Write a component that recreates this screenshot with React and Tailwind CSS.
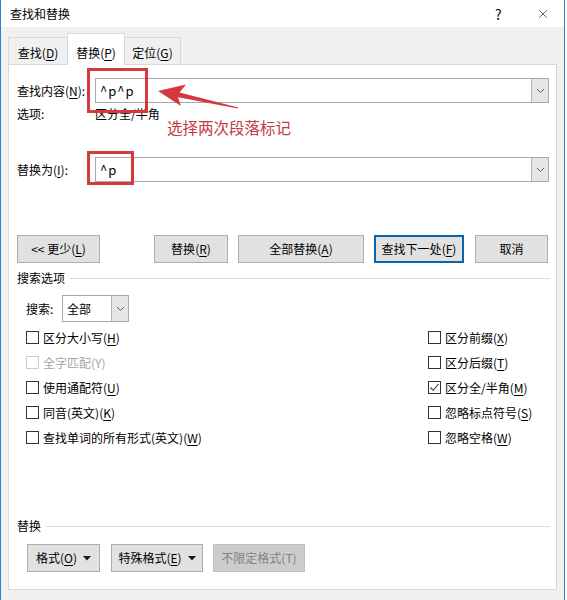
import { X } from 'lucide-react';

const Key = ({ k }) => (
    <>
        (<span className="underline underline-offset-2 decoration-1">{k}</span>)
    </>
);

function Chevron() {
    return (
        <svg width="9" height="6" viewBox="0 0 9 6" className="text-[#606060]">
            <polyline points="1,1 4.5,4.5 8,1" fill="none" stroke="currentColor" strokeWidth="1" />
        </svg>
    );
}

function Combo({ value }) {
    return (
        <div className="flex-1 h-[25px] flex border border-[#a9a9a9] bg-white">
            <div className="flex-1 flex items-center pl-[4px] text-[13px] text-black tracking-[1px]">{value}</div>
            <div className="w-[17px] h-full bg-[#e6e6e6] border-l border-[#b4b4b4] flex items-center justify-center">
                <Chevron />
            </div>
        </div>
    );
}

function Btn({ className, focus, disabled, children }) {
    const border = focus ? 'border-2 border-[#0a64ad]' : disabled ? 'border border-[#bfbfbf]' : 'border border-[#adadad]';
    const tone = disabled ? 'bg-[#cccccc] text-[#838383]' : 'bg-[#e1e1e1] text-black';
    return (
        <div className={`h-[28px] flex items-center justify-center gap-[6px] ${border} ${tone} ${className}`}>
            {children}
        </div>
    );
}

function Caret() {
    return (
        <svg width="8" height="5" viewBox="0 0 8 5">
            <polygon points="0,0 8,0 4,4.5" fill="#1a1a1a" />
        </svg>
    );
}

function Check({ label, k, checked, disabled }) {
    return (
        <div className="h-[25px] flex items-center">
            <div className={`w-[13px] h-[13px] bg-white border flex items-center justify-center ${disabled ? 'border-[#cccccc]' : 'border-[#333333]'}`}>
                {checked && (
                    <svg width="11" height="11" viewBox="0 0 11 11">
                        <polyline points="1.5,5.5 4.2,8.3 9.5,2" fill="none" stroke="#333" strokeWidth="1.1" />
                    </svg>
                )}
            </div>
            <span className={`ml-[4px] ${disabled ? 'text-[#a6a6a6]' : 'text-black'}`}>
                {label}
                {disabled ? `(${k})` : <Key k={k} />}
            </span>
        </div>
    );
}

function SectionTitle({ children }) {
    return (
        <div className="h-[16px] flex items-center pl-[8px] pr-[6px]">
            <span>{children}</span>
            <div className="flex-1 h-px bg-[#dcdcdc] ml-[5px]" />
        </div>
    );
}

const leftOpts = [
    { label: '区分大小写', k: 'H' },
    { label: '全字匹配', k: 'Y', disabled: true },
    { label: '使用通配符', k: 'U' },
    { label: '同音(英文)', k: 'K' },
    { label: '查找单词的所有形式(英文)', k: 'W' },
];

const rightOpts = [
    { label: '区分前缀', k: 'X' },
    { label: '区分后缀', k: 'T' },
    { label: '区分全/半角', k: 'M', checked: true },
    { label: '忽略标点符号', k: 'S' },
    { label: '忽略空格', k: 'W' },
];

export default function App() {
    return (
        <div className="relative w-[565px] h-[600px] bg-[#f0f0f0] border-x border-[#2b7fd6] font-['Noto_Sans_CJK_SC','Microsoft_YaHei',sans-serif] text-[12px] leading-[16px] text-black overflow-hidden">
            {/* 标题栏 */}
            <div className="h-[27px] bg-white flex items-center pl-[9px]">
                <span className="flex-1">查找和替换</span>
                <span className="text-[14px] w-[10px] mr-[31px]">?</span>
                <X className="w-[14px] h-[14px] mr-[14px] text-[#222]" strokeWidth={1.2} />
            </div>

            {/* 选项卡 */}
            <div className="h-[37px] flex items-end pl-[7px]">
                <div className="w-[59px] h-[27px] border-l border-t border-[#d9d9d9] bg-[#f0f0f0] flex justify-center pt-[7px]">
                    查找<Key k="D" />
                </div>
                <div className="relative z-10 w-[58px] h-[32px] -mb-px border-x border-t border-[#d9d9d9] bg-white flex justify-center pt-[11px]">
                    替换<Key k="P" />
                </div>
                <div className="w-[56px] h-[27px] border-r border-t border-[#d9d9d9] bg-[#f0f0f0] flex justify-center pt-[7px]">
                    定位<Key k="G" />
                </div>
            </div>

            {/* 面板 */}
            <div className="ml-[7px] w-[549px] bg-white border border-[#d9d9d9] pb-[17px]">
                <div className="mt-[13px] flex items-center pl-[8px] pr-[7px]">
                    <div className="w-[78px]">
                        查找内容<Key k="N" />:
                    </div>
                    <Combo value="^p^p" />
                </div>
                <div className="mt-[3px] h-[16px] flex items-center pl-[8px]">
                    <div className="w-[78px]">选项:</div>
                    <div>区分全/半角</div>
                </div>

                <div className="mt-[35px] flex items-center pl-[8px] pr-[7px]">
                    <div className="w-[78px]">
                        替换为<Key k="I" />:
                    </div>
                    <Combo value="^p" />
                </div>

                <div className="mt-[53px] flex pl-[8px]">
                    <Btn className="w-[83px]">
                        <span>
                            &lt;&lt; 更少<Key k="L" />
                        </span>
                    </Btn>
                    <Btn className="w-[74px] ml-[54px]">
                        <span>
                            替换<Key k="R" />
                        </span>
                    </Btn>
                    <Btn className="w-[126px] ml-[10px]">
                        <span>
                            全部替换<Key k="A" />
                        </span>
                    </Btn>
                    <Btn className="w-[90px] ml-[10px]" focus>
                        <span>
                            查找下一处<Key k="F" />
                        </span>
                    </Btn>
                    <Btn className="w-[73px] ml-[11px]">取消</Btn>
                </div>

                <div className="mt-[7px]">
                    <SectionTitle>搜索选项</SectionTitle>
                </div>

                <div className="mt-[9px] flex items-center pl-[17px]">
                    <div className="w-[36px]">搜索:</div>
                    <div className="w-[67px] h-[27px] flex border border-[#a9a9a9] bg-white">
                        <div className="flex-1 flex items-center pl-[4px]">全部</div>
                        <div className="w-[17px] h-full bg-[#e6e6e6] border-l border-[#b4b4b4] flex items-center justify-center">
                            <Chevron />
                        </div>
                    </div>
                </div>

                <div className="mt-[3px] flex pl-[17px]">
                    <div className="w-[402px]">
                        {leftOpts.map((o) => (
                            <Check key={o.label} {...o} />
                        ))}
                    </div>
                    <div>
                        {rightOpts.map((o) => (
                            <Check key={o.label} {...o} />
                        ))}
                    </div>
                </div>

                <div className="mt-[68px]">
                    <SectionTitle>替换</SectionTitle>
                </div>

                <div className="mt-[10px] flex pl-[18px]">
                    <Btn className="w-[73px]">
                        <span>
                            格式<Key k="O" />
                        </span>
                        <Caret />
                    </Btn>
                    <Btn className="w-[92px] ml-[11px]">
                        <span>
                            特殊格式<Key k="E" />
                        </span>
                        <Caret />
                    </Btn>
                    <Btn className="w-[92px] ml-[10px]" disabled>
                        不限定格式(T)
                    </Btn>
                </div>
            </div>

            {/* 红色标注 */}
            <div className="absolute left-[86px] top-[68px] w-[61px] h-[45px] border-[3px] border-[#d6393d]" />
            <div className="absolute left-[86px] top-[151px] w-[47px] h-[34px] border-[3px] border-[#d6393d]" />
            <svg className="absolute left-0 top-0" width="567" height="600" viewBox="0 0 567 600">
                <polygon
                    points="157,91 185,84.5 178.5,92.5 237.2,107.4 236.8,108.6 177,97.3 180,106"
                    fill="#d6393d"
                />
            </svg>
            <div className="absolute left-[166px] top-[117px] text-[15.5px] leading-[20px] text-[#c23a40]">选择两次段落标记</div>
        </div>
    );
}
